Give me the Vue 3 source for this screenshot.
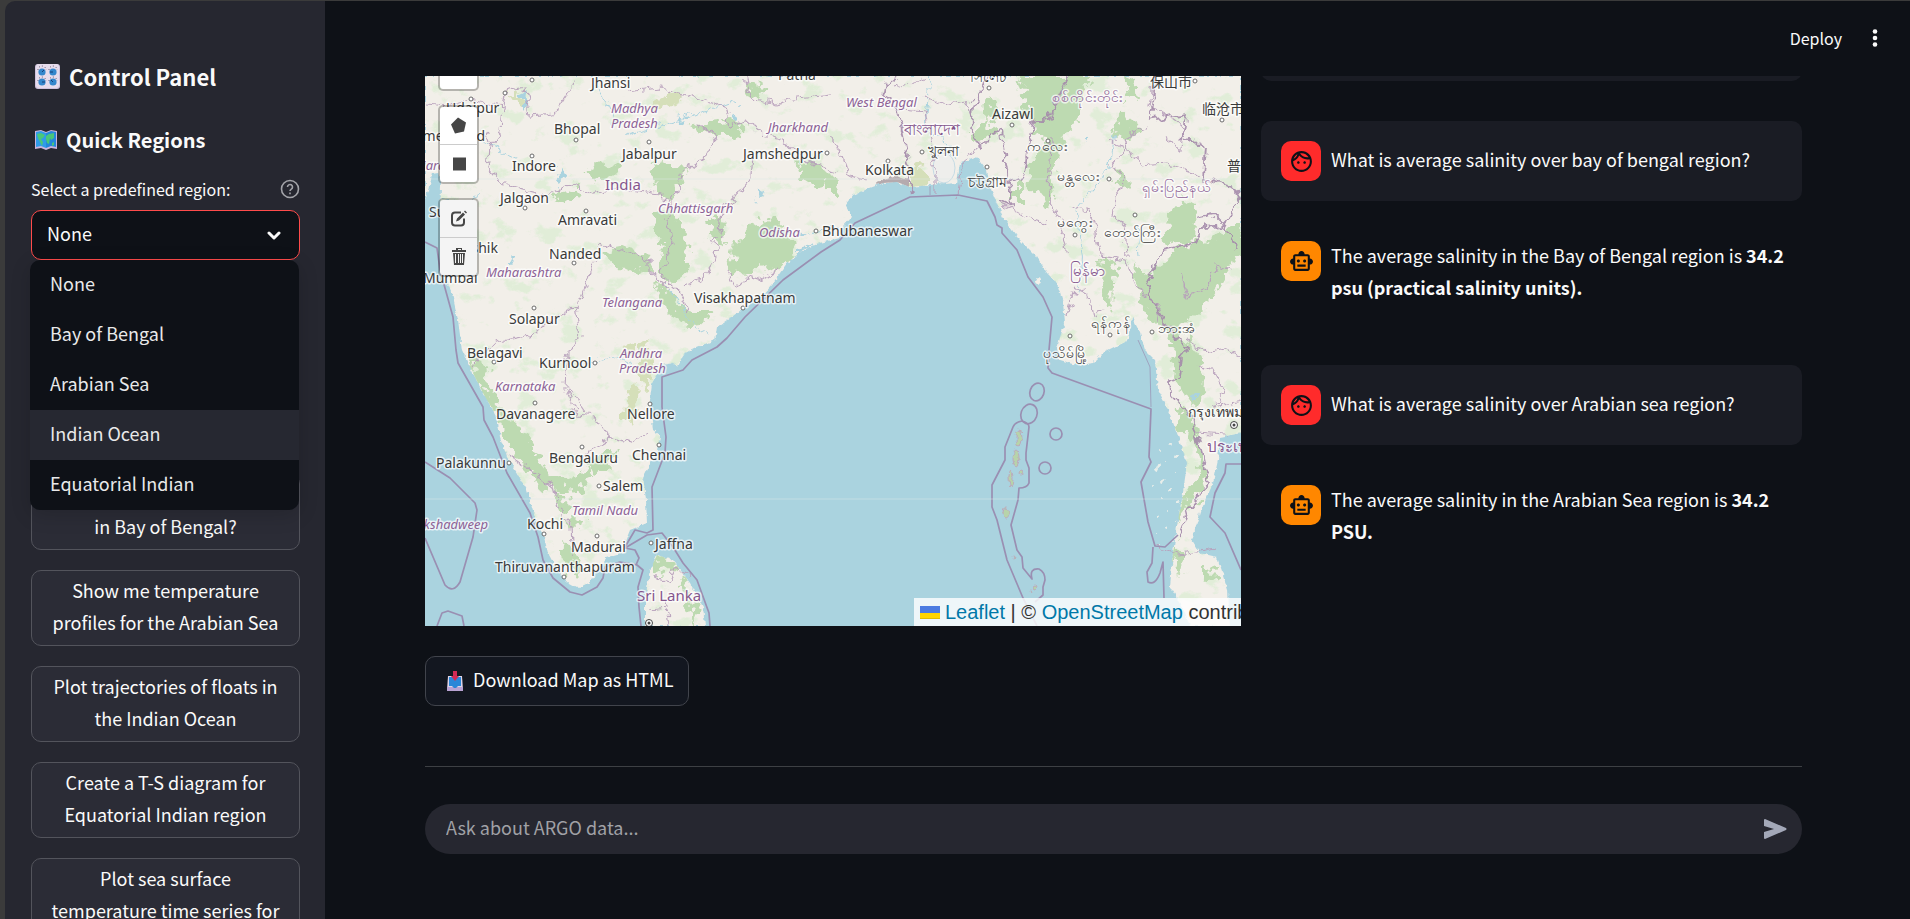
<script setup>
import { ref } from 'vue'

const regions = ['None', 'Bay of Bengal', 'Arabian Sea', 'Indian Ocean', 'Equatorial Indian']
const region = ref('None')
const highlighted = ref('Indian Ocean')
const question = ref('')

const queries = [
  'in Bay of Bengal?',
  'Show me temperature profiles for the Arabian Sea',
  'Plot trajectories of floats in the Indian Ocean',
  'Create a T-S diagram for Equatorial Indian region',
  'Plot sea surface temperature time series for',
]

const messages = [
  { role: 'user', text: 'What is average salinity over bay of bengal region?' },
  { role: 'assistant', text: 'The average salinity in the Bay of Bengal region is ', strong: '34.2 psu (practical salinity units).' },
  { role: 'user', text: 'What is average salinity over Arabian sea region?' },
  { role: 'assistant', text: 'The average salinity in the Arabian Sea region is ', strong: '34.2 PSU.' },
]

const cities = [
  ['Jhansi', 166, 12], ['Udaipur', 21, 37], ['Bhopal', 129, 58], ['Jabalpur', 197, 83], ['Indore', 87, 95],
  ['Ahmedabad', -20, 65], ['Jalgaon', 75, 127], ['Amravati', 133, 149], ['Nanded', 124, 183], ['Solapur', 84, 248],
  ['Visakhapatnam', 269, 227], ['Jamshedpur', 318, 83], ['Patna', 353, 4], ['Nashik', 28, 177], ['Mumbai', -2, 207],
  ['Surat', 4, 141], ['Bhubaneswar', 397, 160], ['Aizawl', 567, 43], ['Kolkata', 440, 99],
  ['খুলনা', 503, 80], ['চট্টগ্রাম', 543, 111], ['সিলেট', 545, 6], ['ကလေး', 602, 75], ['မန္တလေး', 632, 105],
  ['မကွေး', 632, 151], ['တောင်ကြီး', 679, 161], ['ရန်ကုန်', 666, 252], ['ဘားအံ', 733, 257], ['ပုသိမ်မြို့', 618, 282],
  ['保山市', 725, 11], ['临沧市', 777, 38], ['普洱市', 802, 95], ['กรุงเทพมหานคร', 763, 341],
  ['Belagavi', 42, 282], ['Kurnool', 114, 292], ['Davanagere', 71, 343], ['Nellore', 202, 343], ['Bengaluru', 124, 387],
  ['Chennai', 207, 384], ['Palakunnu', 11, 392], ['Salem', 178, 415], ['Kochi', 102, 453], ['Madurai', 146, 476],
  ['Jaffna', 230, 473], ['Thiruvananthapuram', 70, 496],
]
const states = [
  ['Madhya', 186, 37], ['Pradesh', 186, 52], ['Jharkhand', 343, 56], ['Chhattisgarh', 233, 137], ['Odisha', 334, 161],
  ['Maharashtra', 61, 201], ['Telangana', 177, 231], ['West Bengal', 421, 31], ['Gujarat', -19, 94],
  ['Andhra', 195, 282], ['Pradesh', 194, 297], ['Karnataka', 70, 315], ['Tamil Nadu', 147, 439], ['Lakshadweep', -15, 453],
]
const provinces = [
  ['စစ်ကိုင်းတိုင်း', 627, 26], ['ရှမ်းပြည်နယ်', 717, 116],
]
const countries = [
  ['India', 180, 114], ['Sri Lanka', 212, 525], ['বাংলাদেশ', 479, 59], ['မြန်မာ', 645, 200], ['ประเทศไทย', 782, 376],
]
const dots = [
  [107, 4], [46, 23], [80, 17], [151, 64], [224, 66], [107, 80], [100, 132], [161, 135], [149, 187], [109, 232],
  [318, 232], [391, 155], [402, 77], [463, 85], [497, 76], [564, 12], [587, 49], [623, 65], [562, 91], [684, 103],
  [650, 159], [710, 139], [685, 259], [645, 260], [727, 256], [770, 5], [797, 44], [69, 286], [170, 287], [110, 327],
  [225, 328], [157, 371], [234, 369], [84, 387], [174, 410], [119, 458], [172, 460], [226, 467], [139, 501],
]
const capitals = [[224, 547], [809, 349]]

const mainland = 'M0 0H816V357L795 361 793 384 788 407 775 437 767 464 775 477 792 481 803 514 805 550H765L757 530 745 511 748 477 753 444 758 417 762 387 752 357 742 331 733 314 730 284 720 274 715 257 707 241 705 257 700 266 678 277 668 287 652 289 635 284 632 274 635 261 640 247 638 227 632 207 622 197 612 181 592 161 578 141 572 127 565 111 562 94 552 81 535 87 532 107 505 109 485 111 472 106 458 107 445 112 428 119 420 129 427 141 418 151 415 162 395 167 378 174 362 187 348 207 335 221 312 237 292 251 290 264 272 271 260 277 252 290 248 287 237 289 227 307 225 324 228 354 235 359 233 374 225 387 218 401 221 424 222 447 205 454 199 469 202 476 182 482 173 494 165 506 153 512 142 506 132 494 123 477 118 457 110 441 102 414 92 397 82 381 75 361 72 341 58 317 48 297 37 274 33 244 27 217 20 202 19 170 15 140 16 110 13 96 7 97 4 115 0 122Z'
const lanka = 'M232 479 248 484 265 507 278 531 280 550H220V524L225 494Z'

const woods = [
  'M160 94 178 86 196 92 186 102 168 106Z', 'M268 46 300 44 318 48 316 58 290 60 274 56Z', 'M225 92 240 86 262 92 254 110 246 126 232 118Z',
  'M230 138 244 132 258 150 264 178 262 196 248 208 234 196 238 172 228 156Z', 'M310 168 326 148 350 142 366 160 370 180 352 196 336 190 322 200 306 192Z',
  'M176 176 196 172 224 178 226 190 206 196 190 188Z', 'M228 208 244 214 260 236 288 236 276 250 256 248 240 232Z',
  'M370 84 396 88 408 100 392 112 376 102Z', 'M400 104 412 100 414 118 402 118Z', 'M286 140 298 142 300 168 288 160Z', 'M126 118 150 110 158 118 142 128Z',
  'M320 8 342 12 334 24 324 20Z', 'M40 278 58 282 62 310 70 322 86 342 108 372 122 398 140 406 160 392 170 400 150 414 128 416 104 400 92 378 74 346 60 318Z',
  'M126 414 144 422 150 434 138 440Z', 'M142 444 164 446 160 452 144 450Z', 'M136 466 150 474 156 492 148 500 138 488Z', 'M156 388 184 374 192 380 172 396Z',
  'M592 0H664L656 22 636 38 628 62 612 60 608 44 596 38 600 16Z', 'M640 12 664 8 652 46 640 62 628 92 630 120 624 134 618 118 602 108 606 86 618 76 626 44Z',
  'M590 110H598V126H590Z', 'M700 0 710 4 712 18 702 24Z', 'M686 62 696 36 714 50 716 58 702 64Z', 'M690 92 706 104 698 112 692 108Z',
  'M742 142 760 122 772 128 770 166 738 170Z', 'M676 182 690 190 688 230 680 232 678 206Z', 'M742 180 768 168 790 162 814 150 816 176 800 200 786 224 764 244 748 260 724 216 722 206Z',
  'M706 186 722 196 740 238 758 266 766 288 744 264 722 238 712 212Z', 'M746 270 764 262 778 290 780 316 768 330 750 302Z', 'M754 330 768 344 774 370 784 404 762 436 750 452 764 412 774 396 766 360 752 356Z',
  'M750 466 760 474 754 500 746 486Z', 'M780 488 790 492 788 508 780 504Z', 'M540 60 562 46 572 54 560 64Z', 'M558 30 566 20 570 42 560 46Z',
  'M232 480 250 484 252 494 238 496 228 500Z', 'M252 500 260 508 262 520 276 534 270 548 262 528Z',
]
const scrub = [
  'M484 94 496 86 502 94 506 110 484 112Z', 'M214 268 222 262 226 290 222 316 214 300Z', 'M198 274 212 266 210 278Z', 'M206 304 220 318 212 330 206 350 198 340Z', 'M220 32 252 14 258 22 230 36Z', 'M84 20 92 16 98 26 86 28Z',
]
const lakes = [
  'M96 18 104 14 102 28 96 36Z', 'M306 38 314 36 312 46 304 44Z', 'M132 92 142 98 136 110Z', 'M330 112 340 118 336 124Z', 'M660 58 665 60 662 66 659 64Z', 'M765 316 770 318 768 328Z',
  'M252 44 264 42 258 48Z', 'M374 178 386 168 382 178Z', 'M536 88 546 92 552 108 538 104Z', 'M84 180 92 184 88 188Z',
]
const rivers = [
  'M506 0 502 30 500 50 520 66 530 84', 'M655 170 658 200 652 214', 'M690 60 684 90 664 118 652 134 658 190', 'M240 208 256 228 270 250 284 258', 'M340 150 362 156 384 158 412 150',
  'M172 10 184 30 190 52', 'M14 122 36 128 56 118', 'M20 36 58 66 96 84', 'M200 60 240 48 280 36 310 24', 'M160 288 190 280 210 290', 'M714 180 712 150',
]
const boundaries = [
  'M0 28 24 30 44 24 78 30 80 16 100 12 104 40 130 38 142 20 150 2', 'M78 30 76 56 64 70 62 92 74 106 122 120 148 108 168 118 190 112 236 118 246 128 258 96 280 82 292 60 272 48',
  'M202 16 234 12 278 24 302 32 306 50 320 42 340 60 362 66 378 84 400 92 412 96', 'M320 0 326 22 350 28 372 22 406 18', 'M246 128 242 150 248 168 236 198 254 216 264 236',
  'M290 164 292 180 276 204 260 210', 'M328 80 326 100 316 114 306 128 296 132 294 160 284 164', 'M176 168 206 178 224 184 224 196 246 214', 'M176 168 160 210 152 230 128 240 110 258 70 266 60 278 48 290',
  'M152 230 156 260 142 278 140 310 152 338 170 340 186 362 166 374 156 384', 'M186 362 206 366 222 358', 'M82 378 110 398 130 412 136 440 146 450 148 480', 'M142 310 160 336',
  'M302 194 312 212 324 200 338 204 354 194', 'M228 500 244 504 250 492 266 500', 'M240 524 244 550', 'M224 534 244 532', 'M62 58 68 74', 'M470 12 500 2', 'M405 60 416 78 424 100 442 104', 'M474 34 500 36 504 58 510 96 510 118',
  'M500 20 520 30 542 26 548 40', 'M533 120 536 92 552 70', 'M620 148 602 142 574 126', 'M642 180 634 140 624 120 626 60', 'M650 210 664 220 668 240 680 232', 'M650 215 642 240',
  'M646 130 662 134 670 150 676 180 700 184 710 206 734 232 732 248', 'M684 64 700 74 686 90 700 100 690 122 688 140 700 150 702 182', 'M722 50 700 62 704 78 716 88 740 86 766 96 780 106',
  'M730 0 724 30 746 42 758 52 756 74 740 62', 'M762 264 780 276 800 272 816 280', 'M774 290 790 296 800 316 790 330 816 324', 'M772 356 800 358', 'M756 196 762 220 782 212 792 190 808 196', 'M730 470 754 478 792 472',
]
const frontiers = [
  'M473 0 460 10 458 20 472 30 480 70 488 118', 'M562 0 548 30 546 54 554 72 566 58 576 54 584 106 600 98 608 46 624 44 634 20 644 0', 'M574 124 586 130 584 106',
  'M730 0 728 30 724 44 762 38 758 60 780 70 778 102 806 110 816 118', 'M770 142 790 138 800 148 816 118', 'M748 261 725 221 721 207 738 174 768 167 778 151 800 149 812 174', 'M748 261 763 272 757 281 755 301 744 306 745 317 767 341 771 357 777 377 784 407 761 437 753 459',
]
const sea = [
  'M0 166 12 172 15 194 28 241 31 274 33 287 58 331 59 344 68 361 82 397 105 437 113 461 118 484 128 502 145 516 157 519 172 511 178 502 180 491 195 486 212 489 218 494 213 511 214 531 216 550',
  'M200 472 210 474 214 482 211 489', 'M200 471 210 454 222 457 228 454 227 411 240 377 241 361 237 331 237 301 258 294 267 284 292 271 302 262 320 241 358 204 396 176 415 164 430 147 485 121 533 119 562 125 570 141 572 149 577 152 577 157 592 174 603 201 618 221 627 241 624 274 623 292 627 297 726 333 724 381 726 386 716 406 723 446 730 470 740 471 753 459',
  'M200 472 222 459 237 457 248 471 258 487 272 504 284 537 285 550', 'M0 386 25 402 50 427 52 434 48 461 35 506Q28 518 20 509L0 462', 'M12 550 17 537 23 535 37 540 39 550',
  'M597 345Q590 346 588 351L580 371V384L567 409V431L572 444 582 484 598 522 612 550', 'M597 345Q604 347 604 351L601 377V384L604 392V407Q602 412 594 412L593 424 586 449 592 474 597 481 598 492 607 503Q604 492 614 493 620 496 620 504L618 511V519L610 526',
  'M816 388H801L800 397 790 417 785 441 800 457 816 494', 'M728 471 727 487 722 496 723 506Q730 510 735 497L738 486 739 522',
]
</script>

<template>
  <div class="window">
    <aside class="sidebar">
      <h2 class="title">
        <svg class="title-icon" viewBox="0 0 25 25" aria-hidden="true">
          <rect width="25" height="25" rx="3" fill="#cfc2dc" />
          <rect x="1" y="0" width="23" height="24" rx="3" fill="#e6dcec" />
          <g fill="none" stroke="#574b68" stroke-dasharray="1 2"><path d="M3 6a4 4 0 0 1 8 0M14 6a4 4 0 0 1 8 0M3 17a4 4 0 0 1 8 0M14 17a4 4 0 0 1 8 0" /></g>
          <g fill="#3487cc"><circle cx="7" cy="8" r="3.6" /><circle cx="18" cy="8" r="3.6" /><circle cx="7" cy="18" r="3.6" /><circle cx="18" cy="18" r="3.6" /></g>
          <path d="M7 8l2-2M18 8h-3M7 18h3M18 18l-2-2" stroke="#173f77" />
        </svg>
        Control Panel
      </h2>
      <h3 class="subtitle">
        <svg class="subtitle-icon" viewBox="0 0 22 20" aria-hidden="true">
          <path d="M0 1l6-1 5 2 5-2 6 1v18l-6-1-5 2-5-2-6 1z" fill="#c9b4dc" />
          <path d="M1 2l5-1 5 2v15l-5-2-5 1z" fill="#2f9be8" /><path d="M11 3l5-2 5 1v15l-5-1-5 2z" fill="#2387dc" />
          <path d="M2 4l4-1 4 2-2 3-2 1 2 3-1 4-2-4-2-4zM11 6l3-2 5-1v5l-3 2-1-2-1 6-2-1-1-4zM17 13l2-1v3l-2 1z" fill="#49c77a" />
        </svg>
        Quick Regions
      </h3>

      <div class="field">
        <div class="field-head">
          <label for="region">Select a predefined region:</label>
          <button class="help" type="button" aria-label="Help">
            <svg viewBox="0 0 20 20"><circle cx="10" cy="10" r="8.5" /><path d="M7.5 8a2.5 2.5 0 1 1 3.8 2.1c-.9.6-1.3 1-1.3 2M10 13.6v1.6" /></svg>
          </button>
        </div>
        <div class="picker">
          <select id="region" v-model="region">
            <option v-for="name in regions" :key="name">{{ name }}</option>
          </select>
          <svg class="chevron" viewBox="0 0 14 9" aria-hidden="true"><path d="M2 2l5 5 5-5" /></svg>
          <ul class="menu" role="listbox" aria-label="Regions">
            <li v-for="name in regions" :key="name" role="option" :aria-selected="name === region" :class="{ active: name === highlighted }" @mouseenter="highlighted = name" @click="region = name">{{ name }}</li>
          </ul>
        </div>
      </div>

      <div class="queries">
        <button v-for="q in queries" :key="q" type="button" @click="question = q">{{ q }}</button>
      </div>
    </aside>

    <main class="main">
      <header class="toolbar">
        <button type="button">Deploy</button>
        <button type="button" aria-label="Menu">
          <svg class="kebab" viewBox="0 0 6 18"><circle cx="3" cy="2.5" r="2.3" /><circle cx="3" cy="9" r="2.3" /><circle cx="3" cy="15.5" r="2.3" /></svg>
        </button>
      </header>

      <div class="columns">
        <section class="map-column">
          <div class="map">
            <svg class="map-canvas" viewBox="0 0 816 550" preserveAspectRatio="xMinYMin slice" role="img" aria-label="Map of the Bay of Bengal">
              <defs>
                <filter id="rough" x="-5%" y="-5%" width="110%" height="110%">
                  <feTurbulence type="fractalNoise" baseFrequency="0.09" numOctaves="3" seed="4" result="n" />
                  <feDisplacementMap in="SourceGraphic" in2="n" scale="22" xChannelSelector="R" yChannelSelector="G" />
                </filter>
                <filter id="wiggle" x="-5%" y="-5%" width="110%" height="110%">
                  <feTurbulence type="fractalNoise" baseFrequency="0.12" numOctaves="2" seed="9" result="n" />
                  <feDisplacementMap in="SourceGraphic" in2="n" scale="12" xChannelSelector="R" yChannelSelector="G" />
                </filter>
                <filter id="coast" x="-2%" y="-2%" width="104%" height="104%">
                  <feTurbulence type="fractalNoise" baseFrequency="0.2" numOctaves="2" seed="2" result="n" />
                  <feDisplacementMap in="SourceGraphic" in2="n" scale="5" xChannelSelector="R" yChannelSelector="G" />
                </filter>
                <filter id="specks" x="0" y="0" width="100%" height="100%">
                  <feTurbulence type="fractalNoise" baseFrequency="0.045 0.06" numOctaves="5" seed="11" />
                  <feColorMatrix values="0 0 0 0 0.72  0 0 0 0 0.85  0 0 0 0 0.66  0 9 0 0 -5.2" />
                </filter>
                <clipPath id="land"><path :d="mainland" /><path :d="lanka" /></clipPath>
              </defs>
              <rect width="816" height="550" fill="#aad3df" />
              <g fill="#f2efe9" filter="url(#coast)"><path :d="mainland" /><path :d="lanka" /><circle cx="613" cy="205" r="3" /></g>
              <g clip-path="url(#land)">
                <rect width="816" height="550" filter="url(#specks)" opacity="0.8" />
                <g fill="#bddab1" filter="url(#rough)"><path v-for="d in woods" :key="d" :d="d" /></g>
                <g fill="#d5dfb9" filter="url(#rough)"><path v-for="d in scrub" :key="d" :d="d" /></g>
                <g fill="#aad3df" filter="url(#rough)"><path v-for="d in lakes" :key="d" :d="d" /></g>
                <g fill="none" stroke="#aad3df" filter="url(#wiggle)"><path v-for="d in rivers" :key="d" :d="d" /></g>
                <path d="M452 106l8 14 6-12 4 14 6-14 8 12v-16l-14-4z" fill="#b5aaae" filter="url(#coast)" />
                <g fill="#eeeeec" stroke="#c5dbe4"><ellipse cx="519" cy="92" rx="11" ry="15" /></g>
              </g>
              <g fill="none" stroke="#b79fbb" stroke-width="1.2" filter="url(#wiggle)" opacity="0.9"><path v-for="d in boundaries" :key="d" :d="d" /></g>
              <g fill="none" stroke="#a58bab" stroke-width="1.8" filter="url(#wiggle)" opacity="0.9"><path v-for="d in frontiers" :key="d" :d="d" /></g>
              <g fill="#b7d3aa" stroke="#bba9bd" filter="url(#coast)">
                <ellipse cx="594" cy="362" rx="3" ry="8" /><ellipse cx="591" cy="382" rx="3" ry="8" /><ellipse cx="586" cy="402" rx="2" ry="8" /><ellipse cx="581" cy="437" rx="3" ry="5" />
                <circle cx="596" cy="397" r="2" /><circle cx="589" cy="481" r="1" /><circle cx="606" cy="516" r="1" /><circle cx="610" cy="512" r="2" />
              </g>
              <g fill="#e8eeea" filter="url(#wiggle)"><circle v-for="n in 18" :key="n" :cx="728 + (n * 17) % 27" :cy="362 + n * 6" :r="1 + n % 2" /></g>
              <g fill="none" stroke="#9a8fb2" stroke-width="1.7" stroke-linejoin="round">
                <path v-for="d in sea" :key="d" :d="d" />
                <ellipse cx="612" cy="316" rx="7" ry="9" transform="rotate(20 612 316)" /><ellipse cx="604" cy="338" rx="8" ry="10" transform="rotate(20 604 338)" />
                <circle cx="631" cy="358" r="6" /><circle cx="620" cy="392" r="6" />
              </g>
              <path d="M713 264 725 291 726 331M505 110V119" fill="none" stroke="#9a8fb2" opacity="0.7" />
              <path d="M0 103H816M0 423H816" stroke="#dce6e6" opacity="0.5" />
              <g fill="#fff" stroke="#6b6b6b"><circle v-for="(p, i) in dots" :key="i" :cx="p[0]" :cy="p[1]" r="2" /></g>
              <g v-for="(p, i) in capitals" :key="i"><circle :cx="p[0]" :cy="p[1]" r="3.5" fill="#fff" stroke="#444" /><circle :cx="p[0]" :cy="p[1]" r="1.5" fill="#444" /></g>
              <text v-for="(c, i) in states" :key="i" class="place state" :x="c[1]" :y="c[2]">{{ c[0] }}</text>
              <text v-for="c in provinces" :key="c[0]" class="place province" :x="c[1]" :y="c[2]">{{ c[0] }}</text>
              <text v-for="c in cities" :key="c[0]" class="place" :x="c[1]" :y="c[2]">{{ c[0] }}</text>
              <text v-for="c in countries" :key="c[0]" class="place country" :x="c[1]" :y="c[2]">{{ c[0] }}</text>
            </svg>

            <div class="map-tools">
              <div class="tool-group"><button type="button" aria-label="Draw a polyline"></button></div>
              <div class="tool-group">
                <button type="button" aria-label="Draw a polygon"><svg viewBox="0 0 16 16"><path d="M7 0l8 5-2 9-9 2-4-9z" /></svg></button>
                <button type="button" aria-label="Draw a rectangle"><svg viewBox="0 0 16 16"><path d="M2 2h13v13H2z" /></svg></button>
              </div>
              <div class="tool-group disabled">
                <button type="button" aria-label="Edit layers"><svg viewBox="0 0 16 16"><path d="M10 2H4Q1 2 1 5v7q0 3 3 3h6q3 0 3-3V8" fill="none" stroke="#464646" stroke-width="2" /><path d="M5 11l1-3 6-6 2 2-6 6zM13 1l1-1 2 2-1 1z" /></svg></button>
                <button type="button" aria-label="Delete layers"><svg viewBox="0 0 16 17"><path d="M5 2V0h6v2h4v2H1V2zM7 1v1h3V1zM2 5h12l-1 12H3zM4 6v9h1V6zM7 6v9h1V6zM9 6v9h1V6zM11 6v9h1V6z" fill-rule="evenodd" /></svg></button>
              </div>
            </div>

            <div class="attribution">
              <svg class="flag" viewBox="0 0 20 13" aria-hidden="true"><path d="M0 0h20v7H0z" fill="#4c7be1" /><path d="M0 7h20v6H0z" fill="#ffd500" /><path d="M0 12h20v1H0z" fill="#e0bc00" /></svg>
              <a href="#leaflet">Leaflet</a> | © <a href="#osm">OpenStreetMap</a> contributors
            </div>
          </div>

          <button class="download" type="button">
            <svg viewBox="0 0 16 20" aria-hidden="true">
              <path d="M1 5h14l1 14H0z" fill="#dfd5e8" /><path d="M0 16h16v4H0z" fill="#b9a3d3" /><path d="M2 6h12v9h-3l-2 2H7l-2-2H2z" fill="#2b87d8" /><path d="M6 0h4v5h2l-4 5-4-5h2z" fill="#d42a55" />
            </svg>
            <span>Download Map as HTML</span>
          </button>
        </section>

        <section class="chat">
          <div class="message user previous"></div>
          <div v-for="m in messages" :key="m.text" class="message" :class="m.role">
            <span class="avatar">
              <svg v-if="m.role === 'user'" viewBox="0 0 24 24"><path d="M10.25 13c0 .69-.56 1.25-1.25 1.25S7.75 13.69 7.75 13s.56-1.25 1.25-1.25 1.25.56 1.25 1.25zM15 11.75c-.69 0-1.25.56-1.25 1.25s.56 1.25 1.25 1.25 1.25-.56 1.25-1.25-.56-1.25-1.25-1.25zm7 .25c0 5.52-4.48 10-10 10S2 17.52 2 12 6.48 2 12 2s10 4.48 10 10zM10.66 4.12C12.06 6.44 14.6 8 17.5 8c.46 0 .91-.05 1.34-.12C17.44 5.56 14.9 4 12 4c-.46 0-.91.05-1.34.12zM4.42 9.47c1.71-.97 3.03-2.55 3.66-4.44C6.37 6 5.05 7.58 4.42 9.47zM20 12c0-.78-.12-1.53-.33-2.24-.7.15-1.42.24-2.17.24-3.13 0-5.92-1.44-7.76-3.69C8.69 8.87 6.6 10.88 4 11.86c.01.04 0 .09 0 .14 0 4.42 3.58 8 8 8s8-3.58 8-8z" /></svg>
              <svg v-else viewBox="0 0 24 24"><path d="M20 9V7c0-1.1-.9-2-2-2h-3c0-1.66-1.34-3-3-3S9 3.34 9 5H6c-1.1 0-2 .9-2 2v2c-1.66 0-3 1.34-3 3s1.34 3 3 3v4c0 1.1.9 2 2 2h12c1.1 0 2-.9 2-2v-4c1.66 0 3-1.34 3-3s-1.34-3-3-3zm-2 10H6V7h12v12zm-9-6c-.83 0-1.5-.67-1.5-1.5S8.17 10 9 10s1.5.67 1.5 1.5S9.83 13 9 13zm7.5-1.5c0 .83-.67 1.5-1.5 1.5s-1.5-.67-1.5-1.5.67-1.5 1.5-1.5 1.5.67 1.5 1.5zM8 15h8v2H8v-2z" /></svg>
            </span>
            <p>{{ m.text }}<strong v-if="m.strong">{{ m.strong }}</strong></p>
          </div>
        </section>
      </div>

      <hr>

      <form class="ask" @submit.prevent>
        <input v-model="question" type="text" placeholder="Ask about ARGO data..." aria-label="Ask about ARGO data">
        <button type="submit" aria-label="Send"><svg viewBox="0 0 23 20"><path d="M1 0l21 9q1 1 0 2L1 20q-1 0-1-1v-6l10-3L0 7V1q0-1 1-1z" /></svg></button>
      </form>
    </main>
  </div>
</template>

<style>
body {
  background: #3b3b3b;
}
</style>

<style scoped>
* {
  box-sizing: border-box;
}

.window {
  display: flex;
  height: 100vh;
  padding: 1px 0 0 5px;
  overflow: hidden;
  color: #fafafa;
  font: 18px/32px "Noto Sans CJK SC", "Noto Sans", sans-serif;
}

button,
select,
input {
  margin: 0;
  padding: 0;
  border: 0;
  background: none;
  color: inherit;
  font: inherit;
}

.sidebar {
  flex: none;
  width: 320px;
  padding: 58px 25px 0 26px;
  border-top-left-radius: 10px;
  background: #262730;
}

.title,
.subtitle {
  display: flex;
  align-items: center;
  gap: 9px;
  margin: 0;
  padding-left: 4px;
  font-weight: 700;
}

.title {
  font-size: 22px;
  line-height: 34px;
}

.subtitle {
  margin-top: 32px;
  font-size: 20px;
  line-height: 30px;
}

.title-icon {
  width: 25px;
  height: 25px;
}

.subtitle-icon {
  width: 22px;
  height: 20px;
}

.field-head {
  display: flex;
  align-items: center;
  justify-content: space-between;
  margin: 22px 0 9px;
  font-size: 16px;
  line-height: 24px;
}

.help {
  display: flex;
}

.help svg {
  width: 20px;
  height: 20px;
  fill: none;
  stroke: #a3a4a9;
  stroke-width: 1.6;
}

.picker {
  position: relative;
}

.picker select {
  display: block;
  width: 100%;
  height: 50px;
  padding: 0 15px 4px;
  border: 1px solid #ff4b4b;
  border-radius: 10px;
  background: #0e1117;
  appearance: none;
}

.chevron {
  position: absolute;
  top: 21px;
  right: 19px;
  width: 14px;
  height: 9px;
  fill: none;
  stroke: #fafafa;
  stroke-width: 3;
  stroke-linecap: round;
  stroke-linejoin: round;
}

.menu {
  position: absolute;
  z-index: 1;
  top: 100%;
  left: -1px;
  width: 100%;
  margin: 0;
  padding: 0;
  overflow: hidden;
  border-radius: 10px;
  background: #0e1117;
  box-shadow: 0 5px 20px rgba(0, 0, 0, 0.16);
  color: #e9e9ea;
  list-style: none;
}

.menu li {
  padding: 0 20px 4px;
  line-height: 46px;
}

.menu .active {
  background: #262831;
}

.queries {
  display: flex;
  flex-direction: column;
  gap: 20px;
  margin-top: 214px;
}

.queries button {
  display: flex;
  flex: none;
  align-items: flex-end;
  justify-content: center;
  min-height: 76px;
  padding: 3px 16px 7px;
  border: 1px solid #53545c;
  border-radius: 10px;
  background: #2b2c36;
}

.main {
  flex: 1;
  min-width: 0;
  padding: 0 108px 0 100px;
  background: #0e1117;
}

.toolbar {
  display: flex;
  align-items: center;
  justify-content: flex-end;
  gap: 30px;
  height: 75px;
  margin-right: -76px;
  font-size: 16px;
}

.toolbar button {
  display: flex;
  padding-bottom: 2px;
}

.kebab {
  width: 6px;
  height: 18px;
  fill: #fafafa;
}

.columns {
  display: grid;
  grid-template-columns: minmax(0, 816fr) minmax(0, 541fr);
  gap: 20px;
}

.map {
  position: relative;
  height: 550px;
  overflow: hidden;
  background: #aad3df;
}

.map-canvas {
  display: block;
  width: 100%;
  height: 100%;
}

.place {
  fill: #3a3a3a;
  stroke: rgba(255, 255, 255, 0.7);
  stroke-width: 3;
  stroke-linejoin: round;
  paint-order: stroke;
  font: 14px "Noto Sans", "Noto Sans CJK SC", sans-serif;
}

.state {
  fill: #8d6296;
  font-size: 13px;
  font-style: italic;
}

.province {
  fill: #8d6296;
}

.country {
  fill: #85568d;
  font-size: 15px;
}

.map-tools {
  position: absolute;
  top: -26px;
  left: 13px;
  display: flex;
  flex-direction: column;
  gap: 14px;
}

.tool-group {
  border: 2px solid rgba(0, 0, 0, 0.25);
  border-radius: 5px;
  background: #fff;
  background-clip: padding-box;
}

.tool-group.disabled {
  background-color: #f4f4f4;
}

.tool-group button {
  display: flex;
  align-items: center;
  justify-content: center;
  width: 37px;
  height: 37px;
}

.tool-group button + button {
  height: 38px;
  border-top: 1px solid #ccc;
}

.tool-group svg {
  width: 16px;
  height: 17px;
  fill: #464646;
}

.attribution {
  position: absolute;
  right: 0;
  bottom: 0;
  width: 327px;
  padding-left: 6px;
  overflow: hidden;
  background: rgba(255, 255, 255, 0.8);
  color: #333;
  font: 20px/28px "Liberation Sans", Arial, sans-serif;
  white-space: nowrap;
}

.attribution a {
  color: #0078a8;
  text-decoration: none;
}

.flag {
  width: 20px;
  height: 13px;
  margin-right: 5px;
}

.download {
  display: flex;
  align-items: center;
  gap: 10px;
  height: 50px;
  margin-top: 30px;
  padding: 0 14px 0 21px;
  border: 1px solid #41444c;
  border-radius: 10px;
  background: #131720;
}

.download svg {
  width: 16px;
  height: 20px;
}

.download span {
  padding-bottom: 4px;
}

.chat {
  display: flex;
  flex-direction: column;
  height: 550px;
  overflow: hidden;
}

.message {
  display: flex;
  flex: none;
  align-items: flex-start;
  gap: 10px;
  padding: 20px 14px 20px 20px;
  border-radius: 10px;
}

.user {
  align-items: center;
  height: 80px;
  background: #1a1c24;
}

.user + .assistant {
  margin: 20px 0 40px;
}

.previous {
  margin: -75px 0 40px;
}

.avatar {
  display: flex;
  flex: none;
  align-items: center;
  justify-content: center;
  width: 40px;
  height: 40px;
  border-radius: 10px;
  background: #ff2b2b;
}

.assistant .avatar {
  background: #ff8700;
}

.avatar svg {
  width: 25px;
  height: 25px;
  fill: #0e1117;
}

.message p {
  margin: -2px 0 2px;
}

hr {
  height: 1px;
  margin: 60px 0 37px;
  border: 0;
  background: #3d4044;
}

.ask {
  display: flex;
  align-items: center;
  height: 50px;
  padding: 0 15px 0 21px;
  border-radius: 25px;
  background: #262730;
}

.ask input {
  flex: 1;
  min-width: 0;
  padding-bottom: 4px;
  outline: 0;
}

.ask input::placeholder {
  color: #a0a1a6;
  opacity: 1;
}

.ask button {
  display: flex;
}

.ask svg {
  width: 23px;
  height: 20px;
  fill: #a3a8b8;
}
</style>
